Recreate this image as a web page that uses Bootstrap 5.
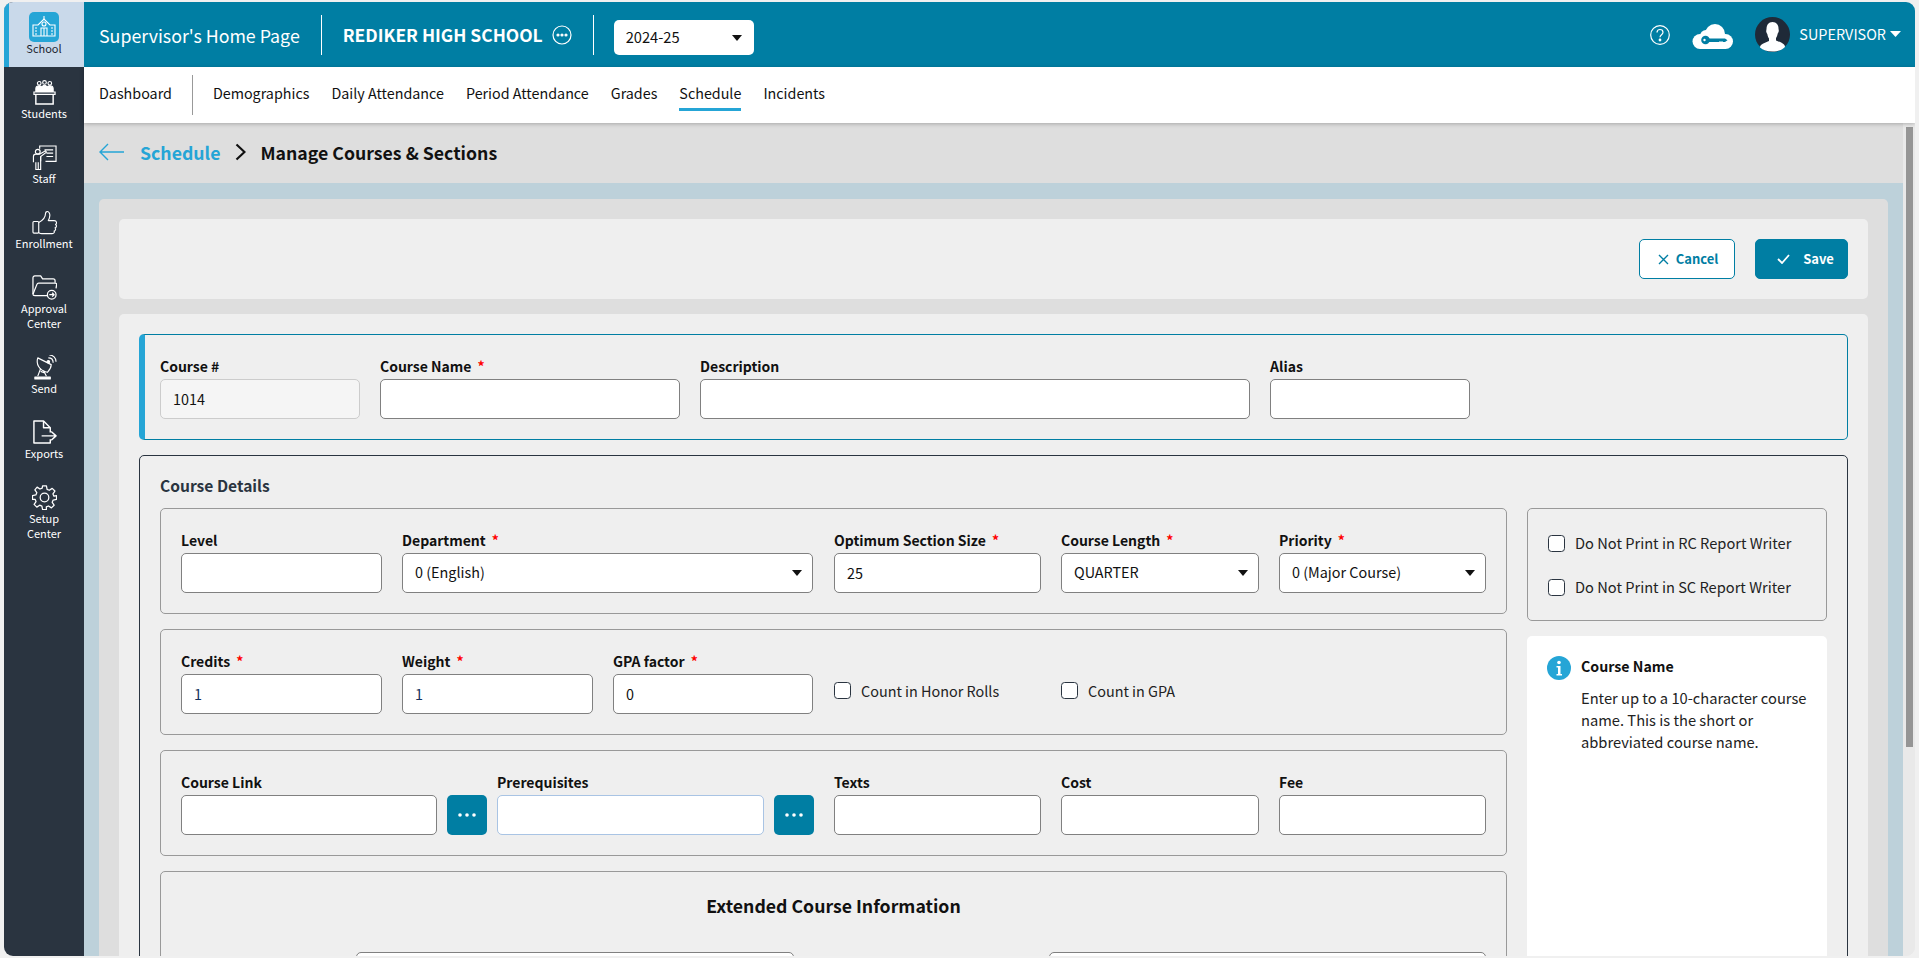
<!DOCTYPE html>
<html lang="en">
<head>
<meta charset="utf-8">
<title>Manage Courses &amp; Sections</title>
<link href="https://cdn.jsdelivr.net/npm/bootstrap@5.3.0/dist/css/bootstrap.min.css" rel="stylesheet">
<style>
html,body{height:958px;overflow:hidden}
body{background:#f0f0f0;padding:2px 4px;font-family:"Noto Sans CJK SC","Liberation Sans",sans-serif;font-size:14.4px;color:#111}
.shell{height:954px;border-radius:9px;overflow:hidden;background:#e9e9e9}
.side{width:80px;flex:none;background:#2a3440;color:#fff;text-align:center;font-size:11px;line-height:15px}
.side-item{display:block;color:#fff;text-decoration:none;height:65px;padding-top:13px}
.side-item svg{display:block;margin:0 auto 1px;width:25px;height:25px}
.side-item.tall{height:80px}
.side-active{background:#c9d9ea;border-left:5px solid #25a5d6;color:#1c2530;padding-top:10px;padding-right:5px}
.side-active svg{width:30px;height:30px;margin-bottom:-1px}
.main{min-width:0}
.topbar{height:65px;flex:none;background:#007ea3;color:#fff;padding:0 14px 0 15px}
.tb-title{font-size:17.800px;line-height:24px}
.tb-school{font-size:17.400px;font-weight:600;line-height:24px}
.tb-dots{margin-left:9px}
.tb-div{width:1px;height:40px;background:#fff;margin:0 21px}
.tb-div2{margin-right:20px}
.yr{width:140px;height:35px;padding:0 12px;font-size:14.700px;border:0;border-radius:5px;color:#111;margin-top:6px;background-position:right 10px center;background-size:14px 10px;background-image:url("data:image/svg+xml,%3csvg xmlns='http://www.w3.org/2000/svg' viewBox='0 0 14 10'%3e%3cpath fill='%23111' d='M2 2h10L7 8z'/%3e%3c/svg%3e")}
.tb-cloud{margin-left:22px;margin-top:4px}
.tb-avatar{margin-left:22px}
.sup{font-size:14.400px;margin-top:-2px;margin-left:9px}
.tb-caret{margin-top:-2px}
.subnav{height:56px;flex:none;background:#fff;padding:0 15px;box-shadow:0 1px 4px rgba(0,0,0,.25);position:relative;z-index:2}
.subnav .nav-link{color:#111;padding:0;margin-right:22px;font-size:14.320px;line-height:30px;border-bottom:3px solid transparent;height:33px;margin-top:-1px}
.subnav .nav-link.on{border-bottom-color:#25a5d6}
.sn-div{width:1px;height:40px;background:#999;margin:0 20px 0 20px}
.bc{height:60px;flex:none;background:#dedede;padding:0 15px 2px;font-size:17.700px;font-weight:600;line-height:26px}
.bc a{color:#25a5d6;text-decoration:none}
.bc-back{margin-right:15px}
.bc-chev{margin:0 14px 0 15px}
.band{background:#bdd1da;padding:16px 15px 0;min-height:0}
.panel{background:#dedede;padding:20px;border-radius:5px 5px 0 0;height:800px}
.pcard{background:#efefef;border-radius:5px}
.actions{height:80px;padding:0 20px;margin-bottom:15px;justify-content:flex-end}
.btn-x{height:40px;font-size:13px;font-weight:600;border-radius:5px;display:inline-flex;align-items:center;justify-content:center}
.btn-cancel{width:96px;background:#fff;border:1px solid #007ea3;color:#007ea3;margin-right:20px;gap:7px;padding:0 0 0 2px}
.btn-save{width:93px;background:#007ea3;border:1px solid #007ea3;color:#fff;gap:13px;padding:0 0 0 8px}
.formcard{padding:20px 20px 0 20px;height:760px}
.hbox{height:106px;border:1px solid #007ea3;border-left:6px solid #25a5d6;border-radius:5px;padding:22px 15px 0;margin-bottom:15px;gap:20px}
.lbl{display:block;font-weight:600;font-size:14px;line-height:18px;height:22px;margin:0;color:#111;white-space:nowrap}
.req{color:#f00;margin-left:6px}
.fc{height:40px;border:1px solid #808080;border-radius:5px;font-size:14.400px;padding:0 12px 2px;color:#111;background-color:#fff}
.val-navy{color:#12305c}
.fc:disabled{background:#f5f5f5;border-color:#ccc;opacity:1}
.sel{background-position:right 8px center;background-size:14px 10px;background-image:url("data:image/svg+xml,%3csvg xmlns='http://www.w3.org/2000/svg' viewBox='0 0 14 10'%3e%3cpath fill='%23111' d='M2 2h10L7 8z'/%3e%3c/svg%3e")}
.detail{border:1px solid #2a3440;border-radius:5px;padding:19px 20px 0;height:700px}
.dt-title{font-weight:600;font-size:15.600px;line-height:20px;color:#2a3440;margin-bottom:13px}
.cols{gap:20px}
.leftcol{width:1347px;flex:none}
.rightcol{width:300px;flex:none}
.ibox{height:106px;border:1px solid #999;border-radius:5px;padding:22px 20px 0;margin-bottom:15px}
.w-a{width:201px;margin-right:20px}
.w-b{width:411px;margin-right:21px}
.w-c{width:207px;margin-right:20px}
.w-d{width:198px;margin-right:20px}
.w-e{width:207px}
.w-f{width:191px;margin-right:20px}
.w-g{width:200px;margin-right:21px}
.w-h{width:256px;margin-right:10px}
.w-i{width:267px;margin-right:10px}
.w-btn{width:40px;margin-right:10px;flex:none}
.w-btn2{width:40px;margin-right:20px;flex:none}
.dots{width:40px;height:40px;margin-top:22px;background:#007ea3;border:0;border-radius:5px;color:#fff;padding:0;display:flex;align-items:center;justify-content:center}
.prq{border-color:#a9c4e4}
.chk{margin:0;width:17px;height:17px;flex:none;border:1px solid #2a3440;border-radius:2px;background-color:#fff}
.chk-lab{font-size:14.400px;line-height:20px;margin-left:10px;color:#222;white-space:nowrap}
.opt-lab{font-size:14.650px}
.cbrow{height:39px;margin-top:19px}
.xbox{height:300px;border:1px solid #999;border-radius:5px;padding:22px 20px 0}
.x-title{font-size:17.700px;font-weight:600;line-height:22px;text-align:center;color:#111;margin-bottom:36px}
.x-in1{width:438px;margin-left:175px;margin-right:255px}
.x-in2{width:437px}
.optbox{height:113px;border:1px solid #999;border-radius:5px;padding:25px 20px 0;margin-bottom:15px}
.optrow{height:18px;margin-bottom:26px}
.info{background:#fff;border-radius:5px;padding:20px;height:330px;gap:10px}
.info svg{flex:none;width:24px;height:24px}
.i-title{font-weight:600;font-size:14.200px;line-height:20px;margin-bottom:11px}
.i-text{font-size:14.700px;line-height:22px;color:#222}
.track{width:12px;flex:none;background:#e9e9e9}
.thumb{width:7px;height:620px;margin:4px 0 0 3px;background:#959595}
</style>
</head>
<body>
<div class="shell d-flex">
  <nav class="side">
    <a class="side-item side-active" href="#">
      <svg viewBox="0 0 30 30"><rect width="30" height="30" rx="5" fill="#25a5d6"/><g fill="none" stroke="#fff" stroke-width="1.100"><path d="M4 24V13h5l6-6 6 6h5v11z"/><path d="M15 7V4"/><circle cx="15" cy="12" r="2"/><path d="M12 24v-8h6v8M15 16v8M6 16h2M6 19h2M22 16h2M22 19h2M6 22h2M22 22h2"/></g></svg>
      School
    </a>
    <a class="side-item" href="#">
      <svg viewBox="0 0 26 26" fill="none" stroke="#fff" stroke-width="1.200"><circle cx="7.500" cy="3.500" r="1.900"/><circle cx="13" cy="2.500" r="1.900"/><circle cx="18.500" cy="3.500" r="1.900"/><path fill="#fff" d="M4 12V9c0-2 1.500-3 3.500-3 1.500 0 2.500.5 3 1.500C11 6 12 5.500 13 5.500s2 .5 2.500 2c.5-1 1.500-1.500 3-1.500 2 0 3.500 1 3.500 3v3z"/><path d="M2 12.500h22v2.500H2z"/><path stroke-width="1.500" d="M4 15v10h18V15"/></svg>
      Students
    </a>
    <a class="side-item" href="#">
      <svg viewBox="0 0 26 26" fill="none" stroke="#fff" stroke-width="1.200"><path d="M8 4V1h17v16H14"/><path d="M13 5h9M15 8.500h7M15 12h7"/><circle cx="6" cy="7" r="2.500"/><path d="M1.500 18v-6c0-1.500 1-2.500 2.500-2.500h4l6-3.500 1 1.500-6 4.500v5"/><path d="M4 18v7.500h5V12M6.500 18v7.500"/></svg>
      Staff
    </a>
    <a class="side-item" href="#">
      <svg viewBox="0 0 26 26" fill="none" stroke="#fff" stroke-width="1.200" stroke-linejoin="round"><rect x="1" y="12" width="6" height="12" rx="1"/><path d="M7 13c4-2 7-5 7-9 0-3 3-3 4-1s0 6-1 8h6c3 0 3 3 1.500 4 1.500 1 1 3-.5 3.500 1 1 .5 3-1 3.500.5 1 0 2.500-2 2.500H10c-1.500 0-2-.5-3-1"/></svg>
      Enrollment
    </a>
    <a class="side-item tall" href="#">
      <svg viewBox="0 0 26 26" fill="none" stroke="#fff" stroke-width="1.300" stroke-linejoin="round"><path d="M1 20V3c0-1 .5-2 2-2h6l2 3h11c1 0 2 .5 2 2v2"/><path d="M1 20l4-10c.3-1 1-1.500 2-1.500h17c1.500 0 2 1 1.500 2L25 14"/><path d="M1 20c0 1 .5 1.500 2 1.500h13"/><circle cx="20.500" cy="20.500" r="4.500"/><path d="M18 20.500h5M21 18.500l2 2-2 2"/></svg>
      Approval<br>Center
    </a>
    <a class="side-item" href="#">
      <svg viewBox="0 0 26 26" fill="none" stroke="#fff" stroke-width="1.200" stroke-linejoin="round"><path d="M6 3c-2 6 1 13 10 15 3-3 4-5 4-8z"/><path d="M9 14l-3 8M12 16l3 6M9 17l5 2"/><path d="M3 23h16v2H3z" fill="#fff"/><circle cx="17" cy="7" r="1.300" fill="#fff"/><path d="M17 3c3 0 5 2 5 5M18 0c4 0 7 3 7 7"/></svg>
      Send
    </a>
    <a class="side-item" href="#">
      <svg viewBox="0 0 26 26" fill="none" stroke="#fff" stroke-width="1.500" stroke-linejoin="round"><path d="M19 13V8l-7-7H2v23h17v-4"/><path d="M12 1v7h7"/><path d="M10 16.500h15M20 12l5 4.500-5 4.500"/></svg>
      Exports
    </a>
    <a class="side-item tall" href="#">
      <svg viewBox="0 0 26 26" fill="none" stroke="#fff" stroke-width="1.300" stroke-linejoin="round"><circle cx="13" cy="13" r="4.500"/><path d="M11 1h4l.7 3.500 2.300 1 3-2 2.800 2.800-2 3 1 2.300L25.500 11v4l-3.500.7-1 2.300 2 3-2.800 2.800-3-2-2.300 1L15 25.500h-4l-.7-3.500-2.300-1-3 2-2.800-2.800 2-3-1-2.300L.5 15v-4l3.500-.7 1-2.300-2-3L5.300 2.200l3 2 2.300-1z"/></svg>
      Setup<br>Center
    </a>
  </nav>
  <div class="main flex-grow-1 d-flex flex-column">
    <header class="topbar d-flex align-items-center">
      <span class="tb-title">Supervisor's Home Page</span>
      <span class="tb-div"></span>
      <span class="tb-school">REDIKER HIGH SCHOOL</span>
      <svg class="tb-dots" width="20" height="20" viewBox="0 0 20 20" fill="none" stroke="#fff" stroke-width="1.200"><circle cx="10" cy="10" r="9"/><circle cx="6" cy="10" r="1" fill="#fff"/><circle cx="10" cy="10" r="1" fill="#fff"/><circle cx="14" cy="10" r="1" fill="#fff"/></svg>
      <span class="tb-div tb-div2"></span>
      <select class="form-select yr"><option>2024-25</option></select>
      <svg class="ms-auto" width="20" height="20" viewBox="0 0 20 20" fill="none" stroke="#fff" stroke-width="1.200"><circle cx="10" cy="10" r="9.300"/><path d="M7 7.500C7 5.500 8.500 4.500 10 4.500s3 1 3 2.800c0 2.400-3 2.500-3 5"/><circle cx="10" cy="15" r=".8" fill="#fff"/></svg>
      <svg class="tb-cloud" width="41" height="25" viewBox="0 0 41 25"><g fill="#fff"><circle cx="8" cy="17.500" r="7.500"/><circle cx="14" cy="12" r="6"/><circle cx="23" cy="10" r="10"/><circle cx="33.500" cy="17.500" r="7.500"/><path d="M8 15h26v10H8z"/></g><circle cx="13.500" cy="16" r="4.300" fill="#007ea3"/><path fill="#007ea3" d="M16 14.500h17l2.500 1.800-2.500 1.700h-2l-1-1-1 1-1-1-1 1H16z"/><circle cx="12.500" cy="16" r="1.200" fill="#fff"/></svg>
      <svg class="tb-avatar" width="35" height="35" viewBox="0 0 35 35"><circle cx="17.500" cy="17.500" r="17.500" fill="#1f2a38"/><path fill="#fff" d="M17.500 5c4 0 6 3 6 6.500 0 1 .5 1.500.2 3-.3 1-.7 1.500-1 2-.4 2-1 3.500-1.700 4.500v2.500c2 1 6 2 8 4 .8.800 1 2 1 2.500-3 3-7 4.500-12.500 4.500S8 33 5 30.500c0-.5.200-1.700 1-2.500 2-2 6-3 8-4v-2.500c-.7-1-1.300-2.500-1.700-4.500-.3-.5-.7-1-1-2-.3-1.500.2-2 .2-3C11.500 8 13.500 5 17.500 5z"/></svg>
      <span class="sup">SUPERVISOR</span>
      <svg class="ms-1 tb-caret" width="11" height="6" viewBox="0 0 11 6"><path fill="#fff" d="M0 0h11L5.500 6z"/></svg>
    </header>
    <div class="subnav d-flex align-items-center">
      <a class="nav-link" style="margin-right:0" href="#">Dashboard</a>
      <span class="sn-div"></span>
      <ul class="nav">
        <li class="nav-item"><a class="nav-link" href="#">Demographics</a></li>
        <li class="nav-item"><a class="nav-link" href="#">Daily Attendance</a></li>
        <li class="nav-item"><a class="nav-link" href="#">Period Attendance</a></li>
        <li class="nav-item"><a class="nav-link" href="#">Grades</a></li>
        <li class="nav-item"><a class="nav-link on" href="#">Schedule</a></li>
        <li class="nav-item"><a class="nav-link" href="#">Incidents</a></li>
      </ul>
    </div>
    <div class="d-flex flex-grow-1" style="min-height:0">
      <div class="flex-grow-1 d-flex flex-column" style="min-width:0">
        <div class="bc d-flex align-items-center">
          <svg class="bc-back" width="26" height="18" viewBox="0 0 26 18" fill="none" stroke="#25a5d6" stroke-width="1.400"><path d="M25 9H1M9 1L1 9l8 8"/></svg>
          <a href="#">Schedule</a>
          <svg class="bc-chev" width="11" height="18" viewBox="0 0 11 18" fill="none" stroke="#111" stroke-width="2.200"><path d="M1.500 1.500L9.500 9l-8 7.500"/></svg>
          <span>Manage Courses &amp; Sections</span>
        </div>
        <div class="band flex-grow-1">
          <div class="panel">
            <div class="pcard actions d-flex align-items-center">
              <button class="btn btn-x btn-cancel" type="button"><svg width="11" height="11" viewBox="0 0 11 11" fill="none" stroke="#007ea3" stroke-width="1.400"><path d="M1 1l9 9M10 1l-9 9"/></svg>Cancel</button>
              <button class="btn btn-x btn-save" type="button"><svg width="13" height="10" viewBox="0 0 13 10" fill="none" stroke="#fff" stroke-width="1.800"><path d="M1 5l4 4 7-8"/></svg>Save</button>
            </div>
            <div class="pcard formcard">
              <div class="hbox d-flex">
                <div style="width:200px"><label class="lbl">Course #</label><input class="form-control fc" disabled value="1014"></div>
                <div style="width:300px"><label class="lbl">Course Name<span class="req">*</span></label><input class="form-control fc"></div>
                <div style="width:550px"><label class="lbl">Description</label><input class="form-control fc"></div>
                <div style="width:200px"><label class="lbl">Alias</label><input class="form-control fc"></div>
              </div>
              <div class="detail">
                <div class="dt-title">Course Details</div>
                <div class="d-flex cols">
                  <div class="leftcol">
                    <div class="ibox d-flex">
                      <div class="w-a"><label class="lbl">Level</label><input class="form-control fc"></div>
                      <div class="w-b"><label class="lbl">Department<span class="req">*</span></label><select class="form-select fc sel"><option>0 (English)</option></select></div>
                      <div class="w-c"><label class="lbl">Optimum Section Size<span class="req">*</span></label><input class="form-control fc" value="25"></div>
                      <div class="w-d"><label class="lbl">Course Length<span class="req">*</span></label><select class="form-select fc sel"><option>QUARTER</option></select></div>
                      <div class="w-e"><label class="lbl">Priority<span class="req">*</span></label><select class="form-select fc sel"><option>0 (Major Course)</option></select></div>
                    </div>
                    <div class="ibox d-flex">
                      <div class="w-a"><label class="lbl">Credits<span class="req">*</span></label><input class="form-control fc val-navy" value="1"></div>
                      <div class="w-f"><label class="lbl">Weight<span class="req">*</span></label><input class="form-control fc val-navy" value="1"></div>
                      <div class="w-g"><label class="lbl">GPA factor<span class="req">*</span></label><input class="form-control fc" value="0"></div>
                      <div class="w-c d-flex align-items-center cbrow"><input class="form-check-input chk" type="checkbox"><span class="chk-lab">Count in Honor Rolls</span></div>
                      <div class="d-flex align-items-center cbrow"><input class="form-check-input chk" type="checkbox"><span class="chk-lab">Count in GPA</span></div>
                    </div>
                    <div class="ibox d-flex">
                      <div class="w-h"><label class="lbl">Course Link</label><input class="form-control fc"></div>
                      <div class="w-btn"><button class="dots" type="button"><svg width="18" height="4" viewBox="0 0 18 4" fill="#fff"><circle cx="2" cy="2" r="1.800"/><circle cx="9" cy="2" r="1.800"/><circle cx="16" cy="2" r="1.800"/></svg></button></div>
                      <div class="w-i"><label class="lbl">Prerequisites</label><input class="form-control fc prq"></div>
                      <div class="w-btn2"><button class="dots" type="button"><svg width="18" height="4" viewBox="0 0 18 4" fill="#fff"><circle cx="2" cy="2" r="1.800"/><circle cx="9" cy="2" r="1.800"/><circle cx="16" cy="2" r="1.800"/></svg></button></div>
                      <div class="w-c"><label class="lbl">Texts</label><input class="form-control fc"></div>
                      <div class="w-d"><label class="lbl">Cost</label><input class="form-control fc"></div>
                      <div class="w-e"><label class="lbl">Fee</label><input class="form-control fc"></div>
                    </div>
                    <div class="xbox">
                      <div class="x-title">Extended Course Information</div>
                      <div class="d-flex">
                        <input class="form-control fc x-in1"><input class="form-control fc x-in2">
                      </div>
                    </div>
                  </div>
                  <div class="rightcol">
                    <div class="optbox">
                      <div class="d-flex align-items-center optrow"><input class="form-check-input chk" type="checkbox"><span class="chk-lab opt-lab">Do Not Print in RC Report Writer</span></div>
                      <div class="d-flex align-items-center optrow"><input class="form-check-input chk" type="checkbox"><span class="chk-lab opt-lab">Do Not Print in SC Report Writer</span></div>
                    </div>
                    <div class="info d-flex">
                      <svg viewBox="0 0 24 24"><circle cx="12" cy="12" r="12" fill="#25a5d6"/><circle cx="12" cy="6.500" r="1.800" fill="#fff"/><path fill="#fff" d="M9.500 10h4v8h1.500v1.500H9.500V18H11v-6.500H9.500z"/></svg>
                      <div>
                        <div class="i-title">Course Name</div>
                        <div class="i-text">Enter up to a 10-character course name. This is the short or abbreviated course name.</div>
                      </div>
                    </div>
                  </div>
                </div>
              </div>
            </div>
          </div>
        </div>
      </div>
      <div class="track"><div class="thumb"></div></div>
    </div>
  </div>
</div>
</body>
</html>
